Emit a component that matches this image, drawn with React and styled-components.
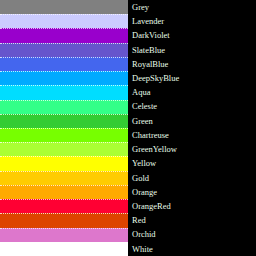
import React from "react";
import styled, { createGlobalStyle } from "styled-components";

const Global = createGlobalStyle`
  html, body {
    margin: 0;
    padding: 0;
    background: #000;
  }
`;

const Board = styled.div`
  width: 256px;
  height: 256px;
  display: grid;
  grid-template-rows: repeat(18, 1fr);
  background: #000;
  overflow: hidden;
`;

const Row = styled.div`
  display: grid;
  grid-template-columns: 128px 128px;
  min-height: 0;
`;

const Swatch = styled.div`
  background: ${(props) => props.$color};
  border-top: ${(props) =>
    props.$first ? "none" : "1px dotted rgba(255, 255, 255, 0.75)"};
  box-sizing: border-box;
`;

const Label = styled.div`
  display: flex;
  align-items: center;
  padding-left: 4px;
  color: #eaffea;
  font-family: "Liberation Serif", "DejaVu Serif", serif;
  font-size: 8.5px;
  line-height: 1;
  white-space: nowrap;
`;

const colors = [
  ["Grey", "#808080"],
  ["Lavender", "#ccccff"],
  ["DarkViolet", "#9900cc"],
  ["SlateBlue", "#6655cc"],
  ["RoyalBlue", "#4466ee"],
  ["DeepSkyBlue", "#00aaff"],
  ["Aqua", "#00ddff"],
  ["Celeste", "#33ff88"],
  ["Green", "#33cc33"],
  ["Chartreuse", "#77ff00"],
  ["GreenYellow", "#aaff33"],
  ["Yellow", "#ffff00"],
  ["Gold", "#ffcc00"],
  ["Orange", "#ffaa00"],
  ["OrangeRed", "#ff0033"],
  ["Red", "#dd4400"],
  ["Orchid", "#dd77cc"],
  ["White", "#ffffff"],
];

export default function App() {
  return (
    <>
      <Global />
      <Board>
        {colors.map(([name, color], index) => (
          <Row key={name}>
            <Swatch $color={color} $first={index === 0} />
            <Label>{name}</Label>
          </Row>
        ))}
      </Board>
    </>
  );
}
